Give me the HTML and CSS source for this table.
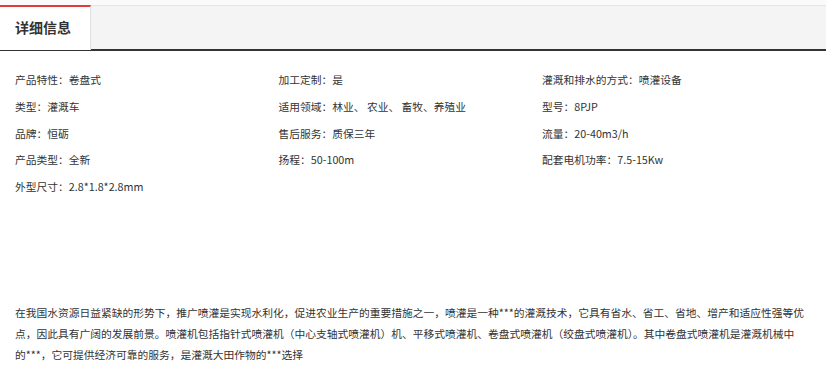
FILE: index.html
```html
<!DOCTYPE html>
<html lang="zh-CN">
<head>
<meta charset="utf-8">
<title>详细信息</title>
<link rel="stylesheet" href="styles.css">
</head>
<body>
<div class="page">
  <div class="tabs">
    <div class="tab active">详细信息</div>
  </div>
  <div class="content">
    <ul class="attrs">
      <li>产品特性：卷盘式</li>
      <li>加工定制：是</li>
      <li>灌溉和排水的方式：喷灌设备</li>
      <li>类型：灌溉车</li>
      <li>适用领域：林业、 农业、 畜牧、养殖业</li>
      <li>型号：8PJP</li>
      <li>品牌：恒砺</li>
      <li>售后服务：质保三年</li>
      <li>流量：20-40m3/h</li>
      <li>产品类型：全新</li>
      <li>扬程：50-100m</li>
      <li>配套电机功率：7.5-15Kw</li>
      <li>外型尺寸：2.8*1.8*2.8mm</li>
    </ul>
    <p class="desc">在我国水资源日益紧缺的形势下，推广喷灌是实现水利化，促进农业生产的重要措施之一，喷灌是一种***的灌溉技术，它具有省水、省工、省地、增产和适应性强等优点，因此具有广阔的发展前景。喷灌机包括指针式喷灌机（中心支轴式喷灌机）机、平移式喷灌机、卷盘式喷灌机（绞盘式喷灌机）。其中卷盘式喷灌机是灌溉机械中<span class="nb">的***，</span>它可提供经济可靠的服务，是灌溉大田作物的***选择</p>
  </div>
</div>
</body>
</html>
```

FILE: styles.css
```css
* { box-sizing: border-box; }
html, body { margin: 0; padding: 0; background: #fff; }
body {
  font-family: "Noto Sans CJK SC", "Microsoft YaHei", sans-serif;
  color: #333;
  font-size: 10.76px;
}
.page {
  width: 826px;
  padding-top: 5px;
  background: linear-gradient(#fafafa, #fafafa) top / 100% 5px no-repeat;
}
.tabs {
  display: flex;
  height: 46px;
  background: #f4f4f4;
  border-top: 1px solid #e4e4e4;
  border-bottom: 2px solid #333;
}
.tab {
  width: 91px;
  height: 45px;
  margin-top: -1px;
  padding-left: 15px;
  background: #fff;
  border-top: 2px solid #e4393c;
  border-right: 1px solid #e0e0e0;
  font-size: 14px;
  font-weight: bold;
  line-height: 41px;
  color: #333;
}
.content {
  padding: 16px 15px 0 15px;
}
.attrs {
  list-style: none;
  margin: 0;
  padding: 0;
  display: grid;
  grid-template-columns: repeat(3, 263.5px);
}
.attrs li {
  line-height: 26.8px;
  white-space: nowrap;
}
.desc {
  margin: 101px 0 0 0;
  width: 794px;
  line-height: 21px;
}
.nb {
  white-space: nowrap;
}
```
